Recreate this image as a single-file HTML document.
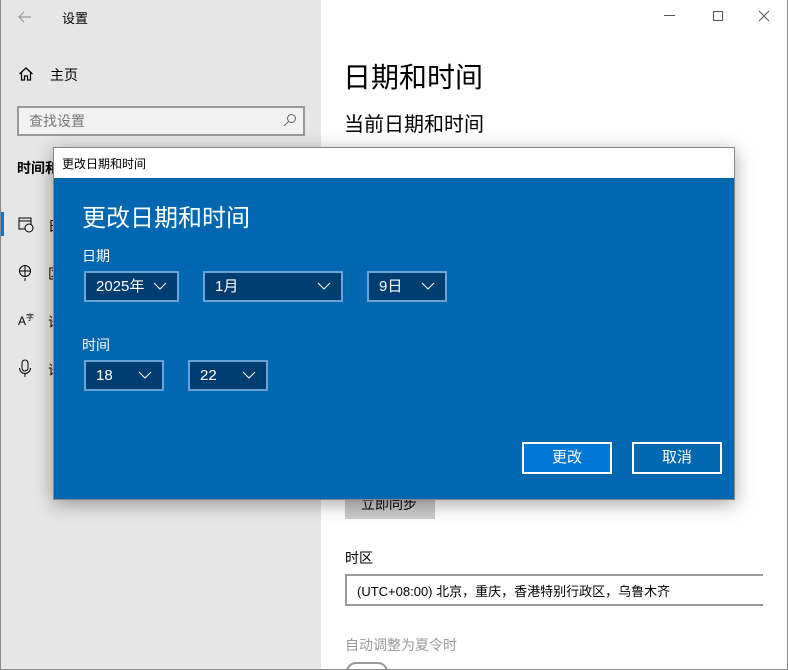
<!DOCTYPE html>
<html><head><meta charset="utf-8"><style>
*{margin:0;padding:0;box-sizing:border-box}
html,body{width:788px;height:670px;overflow:hidden}
body{position:relative;background:#fff;font-family:"Liberation Sans","Noto Sans CJK SC",sans-serif;color:#000}
.abs{position:absolute}
#side{left:0;top:0;width:321px;height:670px;background:#e6e6e6}
#frame{left:0;top:0;width:788px;height:670px;border:1px solid #8a8a8a;border-top:none}
.t{position:absolute;white-space:nowrap}
.dd{position:absolute;height:31px;background:#003e72;border:2px solid #6aa3d6;color:#fff;font-size:15px;line-height:27px;padding-left:10px}
.dd svg{position:absolute;right:10px;top:9px}
.btn{position:absolute;top:442px;width:90px;height:32px;border:2px solid #fff;color:#fff;font-size:15px;text-align:center;line-height:28px}
</style></head><body>
<div id="side" class="abs"></div>
<svg class="abs" style="left:17px;top:9px" width="16" height="16"><path d="M14 8H2M7 3L2 8l5 5" stroke="#999" fill="none" stroke-width="1.2"/></svg>
<div class="t" style="left:62px;top:8px;font-size:13px">设置</div>
<div class="t" style="left:664px;top:15px;width:11px;height:1px;background:#555"></div>
<div class="abs" style="left:713px;top:11px;width:10px;height:10px;border:1px solid #555"></div>
<svg class="abs" style="left:758px;top:10px" width="12" height="12"><path d="M1 1l10 10M11 1L1 11" stroke="#555" stroke-width="1"/></svg>
<svg class="abs" style="left:18px;top:66px" width="16" height="16"><path d="M1.5 8L8 2l6.5 6M3.5 6.5V14h3v-4h3v4h3V6.5" stroke="#000" fill="none" stroke-width="1.2"/></svg>
<div class="t" style="left:50px;top:65px;font-size:14px">主页</div>
<div class="abs" style="left:17px;top:106px;width:288px;height:30px;border:2px solid #999;background:#f2f2f2"></div>
<div class="t" style="left:29px;top:111px;font-size:14px;color:#777">查找设置</div>
<svg class="abs" style="left:283px;top:113px" width="14" height="14"><circle cx="8.5" cy="5.5" r="4" stroke="#666" fill="none"/><path d="M5.5 8.5L1 13" stroke="#666"/></svg>
<div class="t" style="left:17px;top:158px;font-size:14px;font-weight:bold">时间和语言</div>
<div class="abs" style="left:0;top:212px;width:4px;height:24px;background:#0078d7"></div>
<svg class="abs" style="left:18px;top:216px" width="16" height="18"><rect x="1" y="2" width="12" height="11" stroke="#000" fill="none"/><path d="M1 5h12" stroke="#000"/><circle cx="11" cy="12" r="4" fill="#e6e6e6" stroke="#000"/></svg>
<div class="t" style="left:48px;top:216px;font-size:14px">日</div>
<svg class="abs" style="left:18px;top:264px" width="16" height="18"><circle cx="7" cy="7" r="5.5" stroke="#000" fill="none"/><path d="M2 7h10M7 1.5v11M7 14v3" stroke="#000"/></svg>
<div class="t" style="left:48px;top:264px;font-size:14px">区</div>
<div class="t" style="left:18px;top:312px;font-size:12px">A<sup style="font-size:8px">字</sup></div>
<div class="t" style="left:48px;top:312px;font-size:14px">语</div>
<svg class="abs" style="left:18px;top:359px" width="14" height="19"><rect x="4" y="1" width="6" height="11" rx="3" stroke="#000" fill="none"/><path d="M1.5 9a5.5 5.5 0 0011 0M7 14.5V18" stroke="#000" fill="none"/></svg>
<div class="t" style="left:48px;top:360px;font-size:14px">语</div>
<div class="t" style="left:343px;top:56px;font-size:28px">日期和时间</div>
<div class="t" style="left:344px;top:108px;font-size:20px">当前日期和时间</div>
<div class="abs" style="left:345px;top:490px;width:90px;height:29px;background:#ccc"></div>
<div class="t" style="left:361px;top:494px;font-size:14px">立即同步</div>
<div class="t" style="left:345px;top:548px;font-size:14px">时区</div>
<div class="abs" style="left:345px;top:574px;width:418px;height:32px;border:2px solid #999;border-right:none"></div>
<div class="t" style="left:357px;top:581px;font-size:13px">(UTC+08:00) 北京，重庆，香港特别行政区，乌鲁木齐</div>
<div class="t" style="left:345px;top:635px;font-size:14px;color:#999">自动调整为夏令时</div>
<div class="abs" style="left:346px;top:662px;width:42px;height:20px;border:2px solid #999;border-radius:10px"></div>
<div id="frame" class="abs"></div>
<div class="abs" style="left:53px;top:147px;width:682px;height:353px;border:1px solid #888;box-shadow:0 4px 18px rgba(0,0,0,.35);background:#0067b0">
<div class="abs" style="left:0;top:0;width:680px;height:30px;background:#fff"></div>
<div class="t" style="left:8px;top:7px;font-size:12px">更改日期和时间</div>
</div>
<div class="t" style="left:82px;top:198px;font-size:24px;color:#fff">更改日期和时间</div>
<div class="t" style="left:82px;top:246px;font-size:14px;color:#fff">日期</div>
<div class="dd" style="left:84px;top:271px;width:95px">2025年<svg width="14" height="8"><path d="M1 1l6 6 6-6" stroke="#fff" fill="none"/></svg></div>
<div class="dd" style="left:203px;top:271px;width:140px">1月<svg width="14" height="8"><path d="M1 1l6 6 6-6" stroke="#fff" fill="none"/></svg></div>
<div class="dd" style="left:367px;top:271px;width:80px">9日<svg width="14" height="8"><path d="M1 1l6 6 6-6" stroke="#fff" fill="none"/></svg></div>
<div class="t" style="left:82px;top:335px;font-size:14px;color:#fff">时间</div>
<div class="dd" style="left:84px;top:360px;width:80px">18<svg width="14" height="8"><path d="M1 1l6 6 6-6" stroke="#fff" fill="none"/></svg></div>
<div class="dd" style="left:188px;top:360px;width:80px">22<svg width="14" height="8"><path d="M1 1l6 6 6-6" stroke="#fff" fill="none"/></svg></div>
<div class="btn" style="left:522px;background:#0078d7">更改</div>
<div class="btn" style="left:632px">取消</div>
</body></html>
